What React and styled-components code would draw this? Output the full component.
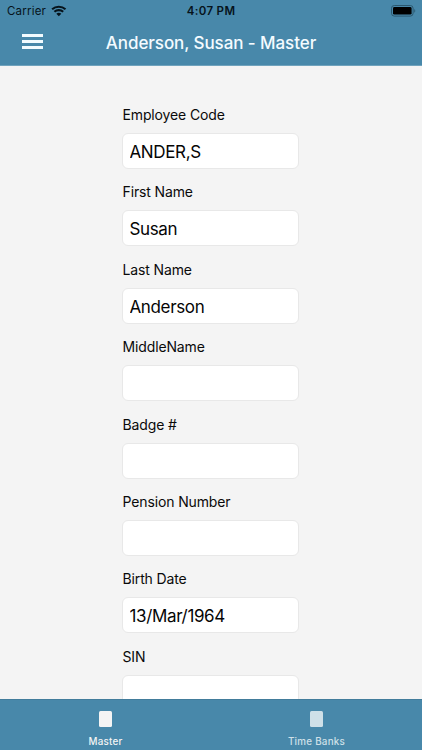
import React from 'react';
import styled, { createGlobalStyle } from 'styled-components';

const fields = [
  { label: 'Employee Code', value: 'ANDER,S' },
  { label: 'First Name', value: 'Susan' },
  { label: 'Last Name', value: 'Anderson' },
  { label: 'MiddleName', value: '' },
  { label: 'Badge #', value: '' },
  { label: 'Pension Number', value: '' },
  { label: 'Birth Date', value: '13/Mar/1964' },
  { label: 'SIN', value: '' },
];

const tabs = ['Master', 'Time Banks'];

const WifiIcon = () => (
  <svg width="16" height="12" viewBox="0 0 16 12">
    <path d="M1.1 4.3A10 10 0 0 1 14.5 4.3" stroke="#06131b" strokeWidth="2.1" fill="none" />
    <path d="M3.4 6.8A6.5 6.5 0 0 1 12.2 6.8" stroke="#06131b" strokeWidth="2.1" fill="none" />
    <path d="M7.8 11.3L5.3 8.8A3.7 3.7 0 0 1 10.3 8.8Z" fill="#06131b" />
  </svg>
);

const BatteryIcon = () => (
  <svg width="25" height="12" viewBox="0 0 25 12">
    <rect x="0.5" y="0.5" width="21.6" height="10.6" rx="2.8" stroke="#2b586f" fill="none" />
    <rect x="2" y="2" width="18.6" height="7.6" rx="1.4" fill="#000" />
    <path d="M23.3 4v3.8c1.3-.6 1.3-3.2 0-3.8z" fill="#2b586f" />
  </svg>
);

const App = () => {
  const [active, setActive] = React.useState('Master');

  return (
    <>
      <GlobalStyle />
      <Screen>
        <Header>
          <StatusBar>
            <Carrier>
              Carrier
              <WifiIcon />
            </Carrier>
            <Clock>4:07 PM</Clock>
            <Battery>
              <BatteryIcon />
            </Battery>
          </StatusBar>
          <NavBar>
            <MenuButton aria-label="Menu">
              <span />
              <span />
              <span />
            </MenuButton>
            <Title>Anderson, Susan - Master</Title>
          </NavBar>
        </Header>
        <Content>
          <Form>
            {fields.map(({ label, value }) => (
              <Field key={label}>
                <Label>{label}</Label>
                <Input defaultValue={value} aria-label={label} />
              </Field>
            ))}
          </Form>
        </Content>
        <TabBar>
          {tabs.map((tab) => (
            <Tab key={tab} $active={tab === active} onClick={() => setActive(tab)}>
              <TabIcon />
              {tab}
            </Tab>
          ))}
        </TabBar>
      </Screen>
    </>
  );
};

const GlobalStyle = createGlobalStyle`
  * {
    box-sizing: border-box;
  }
  body {
    margin: 0;
    font-family: Inter, 'Liberation Sans', sans-serif;
    -webkit-font-smoothing: antialiased;
  }
`;

const Screen = styled.div`
  display: flex;
  flex-direction: column;
  width: 100%;
  height: 100vh;
  overflow: hidden;
  background: #f4f4f4;
`;

const Header = styled.header`
  flex: none;
  height: 66px;
  background: #4888aa;
  border-bottom: 1px solid #70a3bd;
`;

const StatusBar = styled.div`
  display: grid;
  grid-template-columns: 1fr auto 1fr;
  align-items: center;
  height: 22px;
  padding: 0 6px 0 7px;
  color: #06131b;
  font-size: 11.5px;
`;

const Carrier = styled.div`
  display: flex;
  align-items: center;
  gap: 5px;
  letter-spacing: 0.2px;
`;

const Clock = styled.div`
  padding-right: 1px;
  font-weight: 600;
  letter-spacing: 0.35px;
`;

const Battery = styled.div`
  display: flex;
  justify-content: flex-end;
`;

const NavBar = styled.div`
  display: grid;
  grid-template-columns: 44px 1fr 44px;
  align-items: center;
  height: 43px;
  padding: 0 22px;
`;

const MenuButton = styled.button`
  display: flex;
  flex-direction: column;
  gap: 3px;
  width: 21px;
  margin: -4px 0 0;
  padding: 0;
  border: 0;
  background: none;
  span {
    height: 3px;
    background: #f2fbff;
  }
`;

const Title = styled.h1`
  margin: -1px 0 0;
  color: #f4fbff;
  font-size: 17px;
  font-weight: 500;
  letter-spacing: -0.08px;
  text-align: center;
  white-space: nowrap;
`;

const Content = styled.main`
  flex: 1;
  min-height: 0;
  overflow: hidden;
`;

const Form = styled.form`
  display: flex;
  flex-direction: column;
  gap: 13.4px;
  width: 177px;
  margin: 39px 0 0 122px;
`;

const Field = styled.label`
  display: flex;
  flex-direction: column;
  gap: 8px;
`;

const Label = styled.span`
  height: 20px;
  padding-left: 0.5px;
  color: #0a0a0a;
  font-size: 14px;
  line-height: 20px;
  letter-spacing: -0.13px;
`;

const Input = styled.input`
  width: 100%;
  height: 36px;
  padding: 2px 6.5px 0;
  border: 1px solid #e8e8e8;
  border-radius: 6px;
  outline: none;
  background: #fff;
  color: #050505;
  font-family: inherit;
  font-size: 17px;
  letter-spacing: -0.36px;
`;

const TabBar = styled.nav`
  display: flex;
  flex: none;
  height: 51px;
  border-top: 1px solid #427c9b;
  background: #4888aa;
`;

const Tab = styled.button`
  display: flex;
  flex: 1;
  flex-direction: column;
  align-items: center;
  gap: 8px;
  padding: 11px 0 0;
  border: 0;
  background: none;
  color: ${({ $active }) => ($active ? '#f4f4f4' : '#cfe0e8')};
  font-family: inherit;
  font-size: 9.8px;
  font-weight: 500;
  line-height: 14px;
  letter-spacing: 0.25px;
`;

const TabIcon = styled.span`
  width: 13px;
  height: 16px;
  border-radius: 1.5px;
  background: currentColor;
`;

export default App;
